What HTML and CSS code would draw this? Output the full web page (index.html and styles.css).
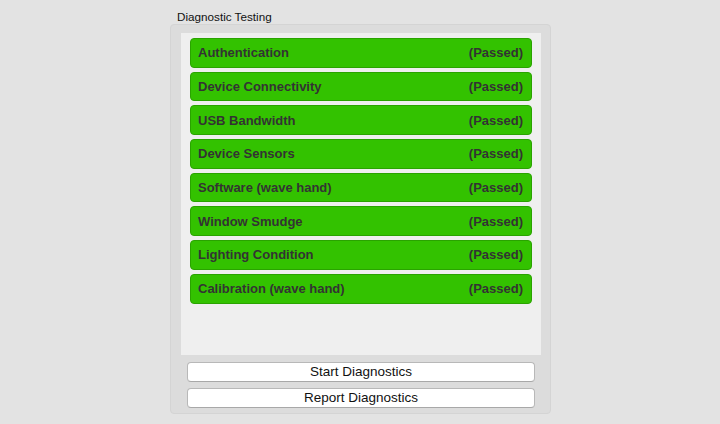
FILE: index.html
```html
<!DOCTYPE html>
<html>
<head>
<meta charset="utf-8">
<link rel="stylesheet" href="styles.css">
</head>
<body>
<div class="panel">
  <div class="title">Diagnostic Testing</div>
  <div class="group">
    <div class="list">
      <div class="row"><span>Authentication</span><span>(Passed)</span></div>
      <div class="row"><span>Device Connectivity</span><span>(Passed)</span></div>
      <div class="row"><span>USB Bandwidth</span><span>(Passed)</span></div>
      <div class="row"><span>Device Sensors</span><span>(Passed)</span></div>
      <div class="row"><span>Software (wave hand)</span><span>(Passed)</span></div>
      <div class="row"><span>Window Smudge</span><span>(Passed)</span></div>
      <div class="row"><span>Lighting Condition</span><span>(Passed)</span></div>
      <div class="row"><span>Calibration (wave hand)</span><span>(Passed)</span></div>
    </div>
    <div class="buttons">
      <button class="btn">Start Diagnostics</button>
      <button class="btn">Report Diagnostics</button>
    </div>
  </div>
</div>
</body>
</html>
```
FILE: styles.css
```css
html, body {
  margin: 0;
  padding: 0;
  background: #e3e3e3;
  width: 720px;
  height: 424px;
  overflow: hidden;
  font-family: "Liberation Sans", Arial, sans-serif;
}

.panel {
  margin-left: 170px;
  width: 381px;
}

.title {
  margin-top: 10px;
  height: 14px;
  line-height: 14px;
  padding-left: 7px;
  font-size: 11.7px;
  color: #111;
}

.group {
  box-sizing: border-box;
  width: 381px;
  height: 390px;
  border: 1px solid #d4d4d4;
  border-radius: 4px;
  background: #dcdcdc;
  padding: 8px 9px 5px 10px;
  display: flex;
  flex-direction: column;
}

.list {
  box-sizing: border-box;
  height: 322px;
  background: #efefef;
  padding: 5px 9px 0 9px;
  display: flex;
  flex-direction: column;
  gap: 4px;
}

.row {
  box-sizing: border-box;
  height: 29.7px;
  background: #33c200;
  border: 1px solid #2aa300;
  border-radius: 4px;
  display: flex;
  align-items: center;
  justify-content: space-between;
  padding: 0 8px 0 7px;
  font-weight: bold;
  font-size: 13px;
  color: #333;
}

.buttons {
  display: flex;
  flex-direction: column;
  gap: 6px;
  padding: 7px 6px 0 6px;
}

.btn {
  box-sizing: border-box;
  height: 20px;
  width: 100%;
  background: #fff;
  border: 1px solid #b8b8b8;
  border-bottom-color: #a8a8a8;
  border-radius: 4px;
  font-family: "Liberation Sans", Arial, sans-serif;
  font-size: 13.5px;
  color: #111;
  padding: 0;
  line-height: 18px;
  text-align: center;
}
```
